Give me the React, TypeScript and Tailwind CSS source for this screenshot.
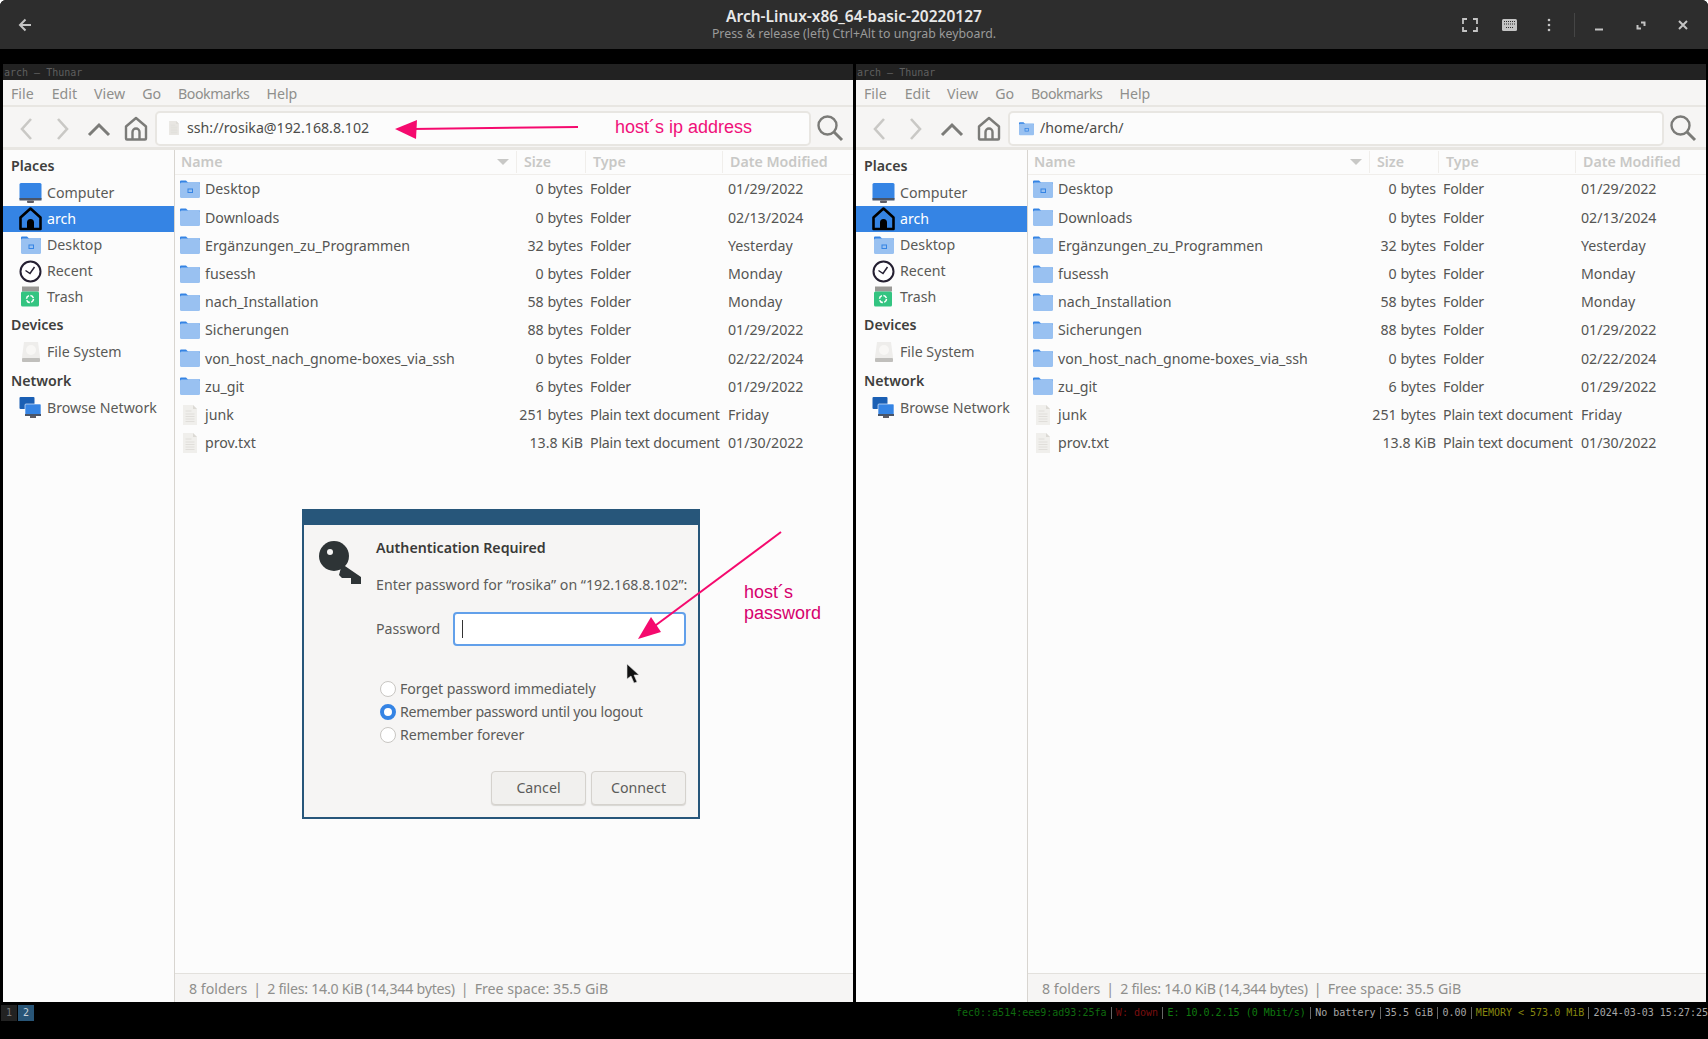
const files = [
  { name: 'Desktop', size: '0 bytes', type: 'Folder', date: '01/29/2022', icon: 'desktop' },
  { name: 'Downloads', size: '0 bytes', type: 'Folder', date: '02/13/2024', icon: 'folder' },
  { name: 'Ergänzungen_zu_Programmen', size: '32 bytes', type: 'Folder', date: 'Yesterday', icon: 'folder' },
  { name: 'fusessh', size: '0 bytes', type: 'Folder', date: 'Monday', icon: 'folder' },
  { name: 'nach_Installation', size: '58 bytes', type: 'Folder', date: 'Monday', icon: 'folder' },
  { name: 'Sicherungen', size: '88 bytes', type: 'Folder', date: '01/29/2022', icon: 'folder' },
  { name: 'von_host_nach_gnome-boxes_via_ssh', size: '0 bytes', type: 'Folder', date: '02/22/2024', icon: 'folder' },
  { name: 'zu_git', size: '6 bytes', type: 'Folder', date: '01/29/2022', icon: 'folder' },
  { name: 'junk', size: '251 bytes', type: 'Plain text document', date: 'Friday', icon: 'doc' },
  { name: 'prov.txt', size: '13.8 KiB', type: 'Plain text document', date: '01/30/2022', icon: 'doc' },
]

function FolderIcon({ inner = false, size = 20 }: { inner?: boolean; size?: number }) {
  return (
    <svg width={size} height={size} viewBox="0 0 20 20" className="shrink-0">
      <path d="M0 2.500a1 1 0 0 1 1-1h5l2 2h12v3H0z" fill="#3584e4" />
      <rect x="0" y="3.500" width="20" height="15.500" rx="1.500" fill="#99c1f1" />
      {inner && <rect x="8" y="10" width="4.500" height="3.500" fill="none" stroke="#3584e4" strokeWidth="1" />}
    </svg>
  )
}

function DocIcon({ size = 20, color = '#f0efec' }: { size?: number; color?: string }) {
  return (
    <svg width={size} height={size} viewBox="0 0 20 20" className="shrink-0">
      <path d="M3 0h10l4 4v16H3z" fill={color} />
      <path d="M13 0l4 4h-4z" fill="#dcdad5" />
      <path d="M5.500 6h6M5.500 9h9M5.500 11.500h9M5.500 14h9M5.500 16.500h9" stroke="#e0deda" strokeWidth="1" />
    </svg>
  )
}

function FileIcon({ kind }: { kind: string }) {
  if (kind === 'doc') return <DocIcon />
  return <FolderIcon inner={kind === 'desktop'} />
}

function PlaceIcon({ kind }: { kind: string }) {
  if (kind === 'computer') {
    return (
      <svg width="23" height="23" viewBox="0 0 23 23">
        <rect x="0.500" y="1" width="22" height="17" rx="1.500" fill="#3584e4" />
        <rect x="0.500" y="16" width="22" height="2.500" fill="#4a5568" />
        <rect x="8" y="18.500" width="7" height="2.500" rx="1" fill="#5e5c64" />
      </svg>
    )
  }
  if (kind === 'home') {
    return (
      <svg width="23" height="24" viewBox="0 0 23 24">
        <path d="M11.500 1.500 1.500 10.500v11.500h20V10.500z" fill="#3584e4" stroke="#000" strokeWidth="2.600" strokeLinejoin="round" />
        <path d="M8 22.500v-7a3.500 3.500 0 0 1 7 0v7z" fill="#000" />
      </svg>
    )
  }
  if (kind === 'desktop') return <FolderIcon inner />
  if (kind === 'recent') {
    return (
      <svg width="23" height="23" viewBox="0 0 23 23">
        <circle cx="11.500" cy="11.500" r="10" fill="#fff" stroke="#241f31" strokeWidth="2" />
        <path d="M6.500 10.500 11 13.500 15.500 7" fill="none" stroke="#241f31" strokeWidth="1.500" />
      </svg>
    )
  }
  if (kind === 'trash') {
    return (
      <svg width="20" height="22" viewBox="0 0 20 22">
        <rect x="1" y="0.500" width="17" height="5" fill="#9a9996" />
        <rect x="0" y="5.500" width="18" height="15" rx="1.500" fill="#33c481" />
        <circle cx="9" cy="13" r="3.500" fill="none" stroke="#fff" strokeWidth="1.500" strokeDasharray="4 1.500" />
      </svg>
    )
  }
  if (kind === 'drive') {
    return (
      <svg width="20" height="22" viewBox="0 0 20 22">
        <path d="M3 1h14l2 15v4a1 1 0 0 1-1 1H2a1 1 0 0 1-1-1v-4z" fill="#eeedeb" />
        <rect x="1" y="17" width="18" height="4" rx="1" fill="#c0bfbc" />
        <circle cx="10" cy="9" r="5" fill="#f8f7f5" />
      </svg>
    )
  }
  return (
    <svg width="23" height="22" viewBox="0 0 23 22">
      <rect x="0.500" y="0" width="15" height="12" rx="1" fill="#1a5fb4" />
      <rect x="6" y="7" width="16" height="12" rx="1" fill="#3584e4" stroke="#fff" strokeWidth="0.600" />
      <rect x="6" y="17" width="16" height="2" fill="#4a5568" />
      <rect x="11" y="19" width="6" height="2" fill="#5e5c64" />
    </svg>
  )
}

function PlaceRow({ label, kind, active = false }: { label: string; kind: string; active?: boolean }) {
  return (
    <div className={`flex h-[26px] items-center pl-[15px] ${active ? 'bg-[#3584e4] text-white' : 'text-[#5a5a57]'}`}>
      <div className="flex w-[29px] shrink-0 justify-center pr-[4px]">
        <PlaceIcon kind={kind} />
      </div>
      <span className="whitespace-nowrap">{label}</span>
    </div>
  )
}

function Heading({ label, className }: { label: string; className: string }) {
  return <div className={`pl-[8px] font-semibold text-[#3f3f3d] ${className}`}>{label}</div>
}

function Toolbar({ path, remote }: { path: string; remote: boolean }) {
  return (
    <div className="flex h-[43px] items-center border-b-[3px] border-[#e8e6e2] bg-[#f6f5f4] pt-[2px]">
      <svg width="150" height="32" viewBox="0 0 150 32" className="-ml-[1px] shrink-0">
        <path d="M29 7 20 17l9 10M56 7l9 10-9 10" fill="none" stroke="#c9c8c5" strokeWidth="2.600" />
        <path d="M87 23 97 13l10 10" fill="none" stroke="#7b7b78" strokeWidth="3" />
        <path d="M124 14.500 134 6l10 8.500V26.500a1 1 0 0 1-1 1H125a1 1 0 0 1-1-1z" fill="none" stroke="#7b7b78" strokeWidth="2.400" strokeLinejoin="round" />
        <path d="M130.500 27v-7a3.500 3.500 0 0 1 7 0v7" fill="none" stroke="#7b7b78" strokeWidth="2.400" />
      </svg>
      <div className="ml-[3px] flex h-[35px] w-[656px] shrink-0 items-center rounded-[5px] border-2 border-[#e8e6e2] bg-[#fcfcfc] pl-[10px] text-[#4c4c4a]">
        <div className="mr-[7px] flex w-[13px] justify-center">
          {remote ? <DocIcon size={14} color="#e8e6e2" /> : <FolderIcon size={15} inner />}
        </div>
        <span>{path}</span>
      </div>
      <svg width="28" height="28" viewBox="0 0 28 28" className="ml-[5px] shrink-0">
        <circle cx="11.500" cy="11.500" r="9" fill="none" stroke="#7b7b78" strokeWidth="2.400" />
        <path d="m18 18 8 8" stroke="#7b7b78" strokeWidth="3" />
      </svg>
    </div>
  )
}

function ThunarWindow({ path, remote = false }: { path: string; remote?: boolean }) {
  return (
    <div className="flex w-[850px] flex-col">
      <div className="h-[16px] bg-[#222222] pl-[1px] font-['DejaVu_Sans_Mono',monospace] text-[10px] leading-[18px] text-[#5f5f5f]">
        arch – Thunar
      </div>
      <div className="flex h-[27px] items-center gap-[17px] border-b-2 border-[#e8e6e2] bg-[#f6f5f4] pl-[8px] pt-[2px] text-[#8f8f8c]">
        <span>File</span>
        <span className="ml-px">Edit</span>
        <span>View</span>
        <span>Go</span>
        <span className="tracking-[-0.45px]">Bookmarks</span>
        <span>Help</span>
      </div>
      <Toolbar path={path} remote={remote} />
      <div className="flex min-h-0 flex-1 bg-[#fcfcfc]">
        <div className="w-[172px] shrink-0 border-r border-[#d8d5d0] pt-[2px]">
          <Heading label="Places" className="flex h-[28px] items-center pb-[1px]" />
          <PlaceRow label="Computer" kind="computer" />
          <PlaceRow label="arch" kind="home" active />
          <PlaceRow label="Desktop" kind="desktop" />
          <PlaceRow label="Recent" kind="recent" />
          <PlaceRow label="Trash" kind="trash" />
          <Heading label="Devices" className="flex h-[29px] items-center" />
          <PlaceRow label="File System" kind="drive" />
          <Heading label="Network" className="flex h-[30px] items-center pt-[2px]" />
          <PlaceRow label="Browse Network" kind="network" />
        </div>
        <div className="flex min-w-0 flex-1 flex-col">
          <div className="flex h-[25px] shrink-0 items-center border-b border-[#f0eeeb] font-semibold text-[#c8c8c6]">
            <div className="flex w-[342px] items-center justify-between border-r border-[#f0eeeb] pl-[6px] pr-[7px]">
              <span>Name</span>
              <span className="h-0 w-0 border-x-[6px] border-t-[6px] border-x-transparent border-t-[#c8c8c6]" />
            </div>
            <div className="w-[69px] border-r border-[#f0eeeb] pl-[7px]">Size</div>
            <div className="w-[137px] border-r border-[#f0eeeb] pl-[7px]">Type</div>
            <div className="pl-[7px]">Date Modified</div>
          </div>
          <div className="flex-1">
            {files.map((f) => (
              <div key={f.name} className="flex h-[28.2px] items-center whitespace-nowrap text-[#555553]">
                <div className="flex w-[342px] items-center gap-[5px] pl-[5px]">
                  <FileIcon kind={f.icon} />
                  <span>{f.name}</span>
                </div>
                <div className="w-[66px] text-right">{f.size}</div>
                <div className="w-[139px] pl-[7px] tracking-[-0.2px]">{f.type}</div>
                <div className="pl-[6px]">{f.date}</div>
              </div>
            ))}
          </div>
          <div className="flex h-[29px] shrink-0 items-center gap-[6px] whitespace-nowrap border-t border-[#e3e1dd] bg-[#f6f5f4] pl-[14px] pt-[2px] text-[#8f8f8c]">
            <span>8 folders</span>
            <span>|</span>
            <span className="tracking-[-0.25px]">2 files: 14.0 KiB (14,344 bytes)</span>
            <span>|</span>
            <span>Free space: 35.5 GiB</span>
          </div>
        </div>
      </div>
    </div>
  )
}

function Radio({ label, on = false }: { label: string; on?: boolean }) {
  return (
    <div className="flex h-[23px] items-center gap-[4px] text-[#5c5c5a]">
      <span
        className={`h-[16px] w-[16px] shrink-0 rounded-full ${
          on ? 'border-[4px] border-[#3584e4] bg-white' : 'border border-[#c8c6c2] bg-white'
        }`}
      />
      <span className={on ? 'tracking-[-0.25px]' : 'tracking-[-0.08px]'}>{label}</span>
    </div>
  )
}

function AuthDialog() {
  return (
    <div className="absolute left-[302px] top-[509px] flex h-[310px] w-[398px] flex-col border-2 border-t-0 border-[#27567a] bg-[#f6f5f4] font-['Noto_Sans',sans-serif] text-[14.2px]">
      <div className="mx-[-2px] h-[16px] shrink-0 bg-[#27567a]" />
      <div className="flex flex-1 pl-[14px] pr-[11px] pt-[11px]">
        <svg width="44" height="44" viewBox="0 0 44 44" className="mt-[4px] shrink-0">
          <circle cx="16" cy="16" r="15" fill="#2e3436" />
          <circle cx="12" cy="12" r="3" fill="#f6f5f4" />
          <path d="M24 24 43 37v7H33v-6h-9l-3-3z" fill="#2e3436" />
        </svg>
        <div className="ml-[14px] w-[310px]">
          <div className="flex h-[24px] items-center font-semibold text-[#3a3a38]">Authentication Required</div>
          <div className="mt-[13px] flex h-[24px] items-center whitespace-nowrap text-[#5c5c5a]">
            Enter password for “rosika” on “192.168.8.102”:
          </div>
          <div className="mt-[15px] flex items-center">
            <span className="w-[77px] text-[#5c5c5a]">Password</span>
            <div className="flex h-[34px] flex-1 items-center rounded-[4px] border-2 border-[#62a0ea] bg-white pl-[7px]">
              <div className="h-[18px] w-px bg-[#333333]" />
            </div>
          </div>
          <div className="ml-[4px] mt-[31px]">
            <Radio label="Forget password immediately" />
            <Radio label="Remember password until you logout" on />
            <Radio label="Remember forever" />
          </div>
          <div className="mt-[25px] flex justify-end gap-[5px]">
            <button className="h-[34px] w-[95px] rounded-[4px] border border-[#d5d2cd] bg-[#f1f0ee] text-[#5c5c5a] shadow-[0_1px_1px_#d8d6d2]">Cancel</button>
            <button className="h-[34px] w-[95px] rounded-[4px] border border-[#d5d2cd] bg-[#f1f0ee] text-[#5c5c5a] shadow-[0_1px_1px_#d8d6d2]">Connect</button>
          </div>
        </div>
      </div>
    </div>
  )
}

const barItems = [
  { text: 'fec0::a514:eee9:ad93:25fa', color: 'text-[#0f6b0f]' },
  { text: 'W: down', color: 'text-[#7a0f0f]' },
  { text: 'E: 10.0.2.15 (0 Mbit/s)', color: 'text-[#0f7a0f]' },
  { text: 'No battery', color: 'text-[#a8a8a8]' },
  { text: '35.5 GiB', color: 'text-[#a8a8a8]' },
  { text: '0.00', color: 'text-[#a8a8a8]' },
  { text: 'MEMORY < 573.0 MiB', color: 'text-[#87870f]' },
  { text: '2024-03-03 15:27:25', color: 'text-[#a8a8a8]' },
]

function StatusBar() {
  return (
    <div className="flex h-[37px] shrink-0 items-start rounded-b-md bg-black pt-[3px] font-['DejaVu_Sans_Mono',monospace] text-[10px] leading-[16px]">
      <div className="ml-[1px] flex h-[16px] w-[16px] items-center justify-center bg-[#222222] text-[#777777]">1</div>
      <div className="ml-[1px] flex h-[16px] w-[16px] items-center justify-center bg-[#285577] text-[#c8d4dc]">2</div>
      <div className="ml-auto flex items-center whitespace-pre">
        {barItems.map((b, i) => (
          <span key={b.text} className="flex items-center">
            {i > 0 && <span className="mx-[4.2px] h-[12px] w-px bg-[#666666]" />}
            <span className={b.color}>{b.text}</span>
          </span>
        ))}
      </div>
    </div>
  )
}

export default function App() {
  return (
    <div className="relative h-[1039px] w-[1708px] overflow-hidden bg-white font-['Noto_Sans',sans-serif] text-[14.2px]">
      <div className="flex h-full flex-col overflow-hidden rounded-t-md bg-black">
        <div className="grid h-[49px] shrink-0 grid-cols-[1fr_auto_1fr] items-center bg-[#2d2d2d]">
          <svg width="14" height="14" viewBox="0 0 14 14" className="ml-[18px]">
            <path d="M13 7H3M7.500 1.500 2 7l5.500 5.500" fill="none" stroke="#c4c4c4" strokeWidth="2" />
          </svg>
          <div className="text-center">
            <div className="text-[15.5px] font-semibold leading-[19px] text-[#e8e8e8]">Arch-Linux-x86_64-basic-20220127</div>
            <div className="text-[12.300px] leading-[16px] text-[#9a9a9a]">Press &amp; release (left) Ctrl+Alt to ungrab keyboard.</div>
          </div>
          <svg width="240" height="30" viewBox="0 0 240 30" className="mr-[14px] justify-self-end">
            <path d="M9 14V9h4M19 9h4v5M23 17v4h-4M13 21H9v-4" fill="none" stroke="#c4c4c4" strokeWidth="1.800" />
            <rect x="48" y="9" width="15" height="12" rx="1.500" fill="#c4c4c4" />
            <path d="M50 11.500h11M50 14h11M52 17.500h7" stroke="#2d2d2d" strokeWidth="1" strokeDasharray="1 1" />
            <circle cx="95" cy="10" r="1.300" fill="#c4c4c4" />
            <circle cx="95" cy="15" r="1.300" fill="#c4c4c4" />
            <circle cx="95" cy="20" r="1.300" fill="#c4c4c4" />
            <path d="M120.500 3v24" stroke="#454545" strokeWidth="1" />
            <path d="M141 19.500h8" stroke="#c4c4c4" strokeWidth="2" />
            <path d="M187 12.500h3.500V16M183.500 15v3.500H187" fill="none" stroke="#c4c4c4" strokeWidth="2" />
            <path d="m225 11 8 8M233 11l-8 8" stroke="#c4c4c4" strokeWidth="2" />
          </svg>
        </div>
        <div className="h-[15px] shrink-0 bg-black" />
        <div className="flex min-h-0 flex-1 gap-[3px] pl-[3px] pr-[2px]">
          <ThunarWindow path="ssh://rosika@192.168.8.102" remote />
          <ThunarWindow path="/home/arch/" />
        </div>
        <StatusBar />
      </div>

      <AuthDialog />

      {/* mouse pointer */}
      <svg width="14" height="21" viewBox="0 0 14 21" className="absolute left-[626px] top-[663px]">
        <path d="M1 1v15l4-3 3 7 3-1-3-7h5z" fill="#111" stroke="#ddd" strokeWidth="0.600" />
      </svg>

      {/* screenshot annotations */}
      <svg width="1708" height="1039" viewBox="0 0 1708 1039" className="pointer-events-none absolute left-0 top-0">
        <path d="M578 127 412 129" stroke="#f50a6e" strokeWidth="2" />
        <path d="M395 129 417 120 416 139z" fill="#f50a6e" />
        <path d="M781 532 652 628" stroke="#f50a6e" strokeWidth="2" />
        <path d="M638 639 651 617 661 632z" fill="#f50a6e" />
      </svg>
      <div className="absolute left-[615px] top-[115px] font-['Liberation_Sans',sans-serif] text-[18px] leading-[24px] text-[#f0107a]">host´s ip address</div>
      <div className="absolute left-[744px] top-[582px] font-['Liberation_Sans',sans-serif] text-[18px] leading-[21px] text-[#d6006e]">
        host´s
        <br />
        password
      </div>
    </div>
  )
}
